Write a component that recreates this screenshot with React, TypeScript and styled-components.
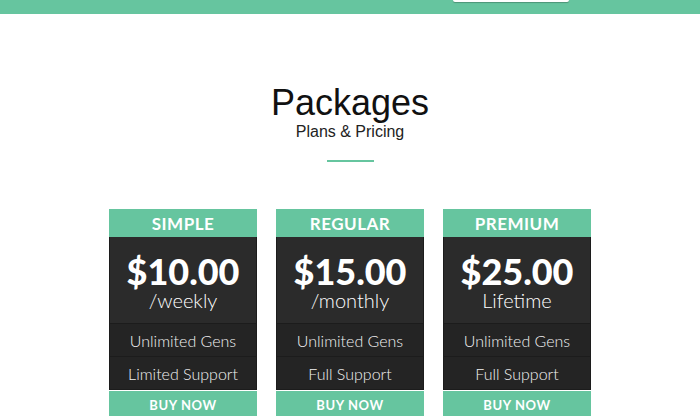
import React from 'react';
import styled, { createGlobalStyle } from 'styled-components';

const GlobalStyle = createGlobalStyle`
  body {
    margin: 0;
    background: #ffffff;
    font-family: "Liberation Sans", Arial, sans-serif;
    overflow: hidden;
  }
`

const Page = styled.div`
  width: 700px;
  display: flex;
  flex-direction: column;
  align-items: center;

  & > * {
    flex-shrink: 0;
  }
`

const TopBar = styled.div`
  align-self: stretch;
  height: 14px;
  background: #66c59f;
  display: flex;
  justify-content: flex-end;
  padding-right: 131px;
`

const NavButton = styled.div`
  width: 116px;
  height: 2px;
  background: #ffffff;
  border-radius: 0 0 4px 4px;
  box-shadow: 0 1px 1px rgba(0, 0, 0, 0.25);
`

const Title = styled.h1`
  margin: 69px 0 0;
  font-size: 36px;
  font-weight: 400;
  line-height: 40px;
  color: #111;
`

const Subtitle = styled.div`
  margin-top: -1px;
  font-size: 16px;
  line-height: 20px;
  color: #222;
`

const Divider = styled.div`
  width: 47px;
  height: 2px;
  margin-top: 18px;
  background: #66c59f;
`

const Cards = styled.div`
  display: flex;
  gap: 19px;
  margin-top: 47px;
`

const Card = styled.div`
  width: 148px;
  display: flex;
  flex-direction: column;
`

const CardHeader = styled.div`
  height: 28px;
  background: #66c59f;
  color: #fff;
  font-family: "Lato", "Open Sans", sans-serif;
  font-weight: 700;
  font-size: 17px;
  letter-spacing: 0.5px;
  display: flex;
  align-items: center;
  justify-content: center;
`

const Body = styled.div`
  background: #2b2b2b;
  border: 1px solid #1c1c1c;
  border-top: none;
`

const PriceBlock = styled.div`
  height: 86px;
  display: flex;
  flex-direction: column;
  align-items: center;
  justify-content: center;
  color: #fff;
`

const Price = styled.div`
  font-family: "Lato", "Open Sans", sans-serif;
  font-weight: 900;
  font-size: 36px;
  line-height: 38px;
  margin-top: 2px;
`

const Period = styled.div`
  font-family: "Lato", "Open Sans", sans-serif;
  font-weight: 300;
  font-size: 20px;
  line-height: 20px;
`

const Feature = styled.div`
  height: 32px;
  background: #242424;
  border-top: 1px solid #1c1c1c;
  color: #f2f2f2;
  font-family: "Lato", "Open Sans", sans-serif;
  font-weight: 300;
  font-size: 16px;
  display: flex;
  align-items: center;
  justify-content: center;
`

const BuyButton = styled.div`
  height: 28px;
  margin-top: 1px;
  background: #66c59f;
  color: #fff;
  font-family: "Lato", "Open Sans", sans-serif;
  font-weight: 700;
  font-size: 13px;
  letter-spacing: 0.6px;
  display: flex;
  align-items: center;
  justify-content: center;
`

interface Plan {
  name: string
  price: string
  period: string
  features: string[]
}

const plans: Plan[] = [
  { name: 'SIMPLE', price: '$10.00', period: '/weekly', features: ['Unlimited Gens', 'Limited Support'] },
  { name: 'REGULAR', price: '$15.00', period: '/monthly', features: ['Unlimited Gens', 'Full Support'] },
  { name: 'PREMIUM', price: '$25.00', period: 'Lifetime', features: ['Unlimited Gens', 'Full Support'] },
]

const App: React.FC = () => {
  return <>
    <GlobalStyle />
    <Page>
      <TopBar><NavButton /></TopBar>
      <Title>Packages</Title>
      <Subtitle>Plans &amp; Pricing</Subtitle>
      <Divider />
      <Cards>
        {plans.map(plan =>
          <Card key={plan.name}>
            <CardHeader>{plan.name}</CardHeader>
            <Body>
              <PriceBlock>
                <Price>{plan.price}</Price>
                <Period>{plan.period}</Period>
              </PriceBlock>
              {plan.features.map(f => <Feature key={f}>{f}</Feature>)}
            </Body>
            <BuyButton>BUY NOW</BuyButton>
          </Card>
        )}
      </Cards>
    </Page>
  </>
}

export default App;
